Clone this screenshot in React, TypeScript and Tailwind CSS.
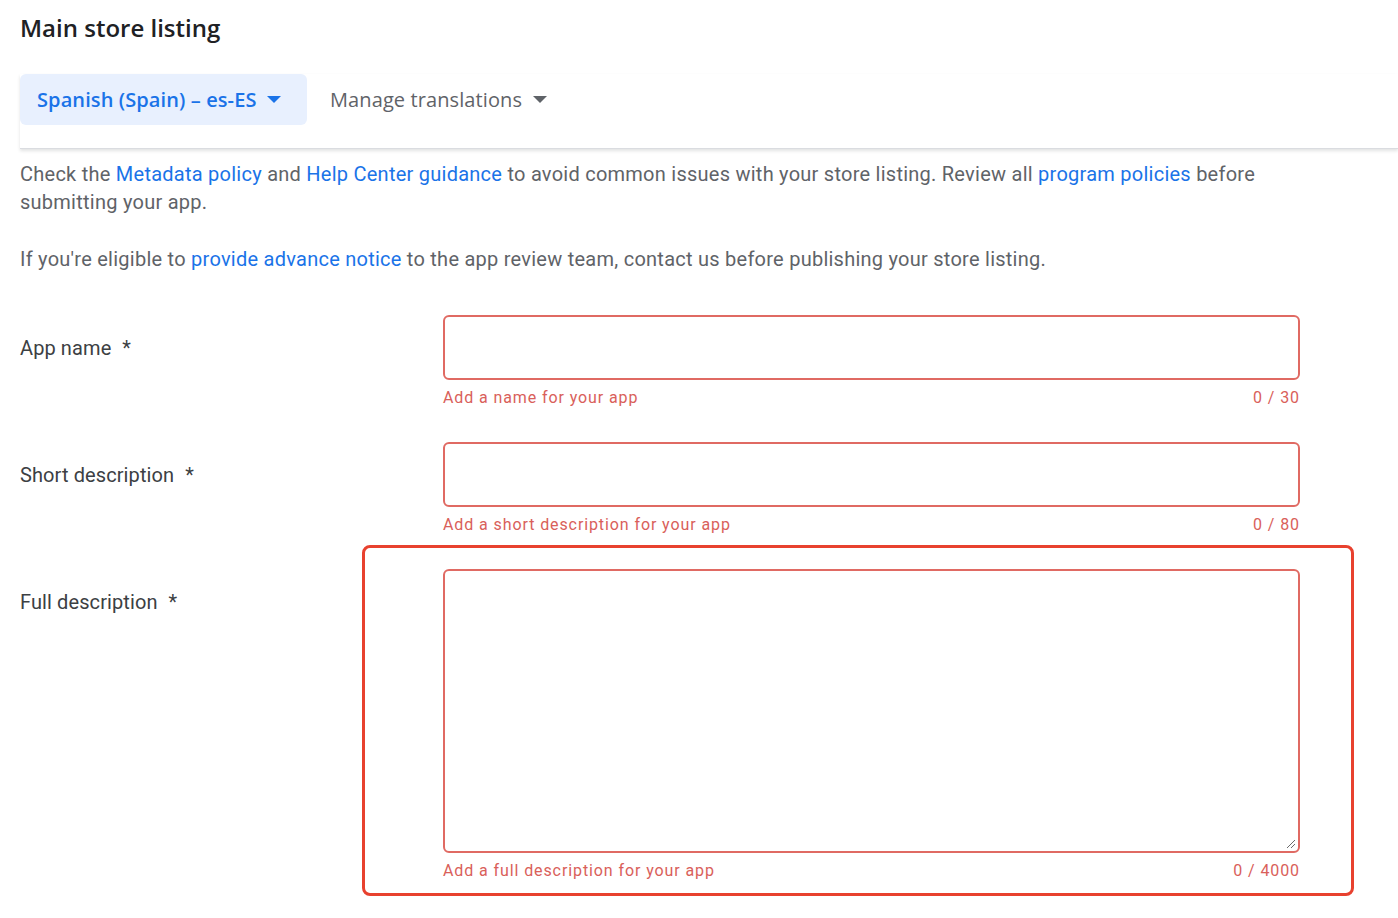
import React from "react";

function Caret({ className }: { className: string }) {
  return (
    <svg width="14" height="8" viewBox="0 0 14 8" className={className}>
      <path d="M0 0 L14 0 L7 7 Z" fill="currentColor" />
    </svg>
  );
}

function Field({
  label,
  helper,
  count,
  tall,
}: {
  label: string;
  helper: string;
  count: string;
  tall?: boolean;
}) {
  return (
    <div className="flex">
      <div className="w-[423px] shrink-0 pt-[18px] text-[20px] tracking-[0.1px] text-[#3c4043]">
        {label}
        <span className="ml-[11px]">*</span>
      </div>
      <div className="w-[857px] shrink-0">
        <div
          className={`relative rounded-[6px] border-[2px] border-[#e06a63] bg-white ${
            tall ? "h-[284px]" : "h-[65px]"
          }`}
        >
          {tall && (
            <svg
              width="10"
              height="10"
              viewBox="0 0 10 10"
              className="absolute bottom-[2px] right-[2px]"
            >
              <path d="M1 9 L9 1 M5 9 L9 5" stroke="#6b6b6b" strokeWidth="1" />
            </svg>
          )}
        </div>
        <div className="mt-[6px] flex justify-between text-[16px] tracking-[0.9px] text-[#d9605a]">
          <span>{helper}</span>
          <span>{count}</span>
        </div>
      </div>
    </div>
  );
}

export default function App() {
  return (
    <div
      className="min-h-[918px] w-[1398px] bg-white text-[#3c4043]"
      style={{ fontFamily: "Roboto, 'Liberation Sans', sans-serif" }}
    >
      <div className="pl-[20px]">
        <h1
          className="pt-[11px] text-[24px] font-semibold leading-[34px] text-[#202124]"
          style={{ fontFamily: "'Open Sans', Roboto, sans-serif" }}
        >
          Main store listing
        </h1>
        <div
          className="mt-[29px] flex items-center border-b border-[#dadce0] pb-[23px] shadow-[0_2px_3px_rgba(60,64,67,0.15)]"
          style={{ fontFamily: "'Open Sans', Roboto, sans-serif" }}
        >
          <div className="flex h-[51px] w-[287px] items-center rounded-[6px] bg-[#e8f0fe] pl-[17px] text-[20px] font-semibold tracking-[0.1px] text-[#1a73e8]">
            Spanish (Spain) – es-ES
            <Caret className="ml-[10px] text-[#1a73e8]" />
          </div>
          <div className="ml-[23px] flex items-center text-[20px] font-medium tracking-[0.1px] text-[#5f6368]">
            Manage translations
            <Caret className="ml-[11px] text-[#5f6368]" />
          </div>
        </div>
        <div className="pt-[11px] text-[20px] leading-[28px] tracking-[0.25px] text-[#5f6368]">
          <p className="w-[1300px]">
            Check the <span className="text-[#1a73e8]">Metadata policy</span> and{" "}
            <span className="text-[#1a73e8]">Help Center guidance</span> to avoid common issues
            with your store listing. Review all{" "}
            <span className="text-[#1a73e8]">program policies</span> before submitting your app.
          </p>
          <p className="mt-[29px]">
            If you're eligible to{" "}
            <span className="text-[#1a73e8]">provide advance notice</span> to the app review
            team, contact us before publishing your store listing.
          </p>
        </div>
        <div className="mt-[42px] flex flex-col gap-[32px]">
          <Field label="App name" helper="Add a name for your app" count="0 / 30" />
          <Field
            label="Short description"
            helper="Add a short description for your app"
            count="0 / 80"
          />
          <div className="relative">
            <Field
              label="Full description"
              helper="Add a full description for your app"
              count="0 / 4000"
              tall
            />
            <div className="pointer-events-none absolute left-[342px] top-[-24px] h-[351px] w-[992px] rounded-[8px] border-[3px] border-[#e8412f]" />
          </div>
        </div>
      </div>
    </div>
  );
}
